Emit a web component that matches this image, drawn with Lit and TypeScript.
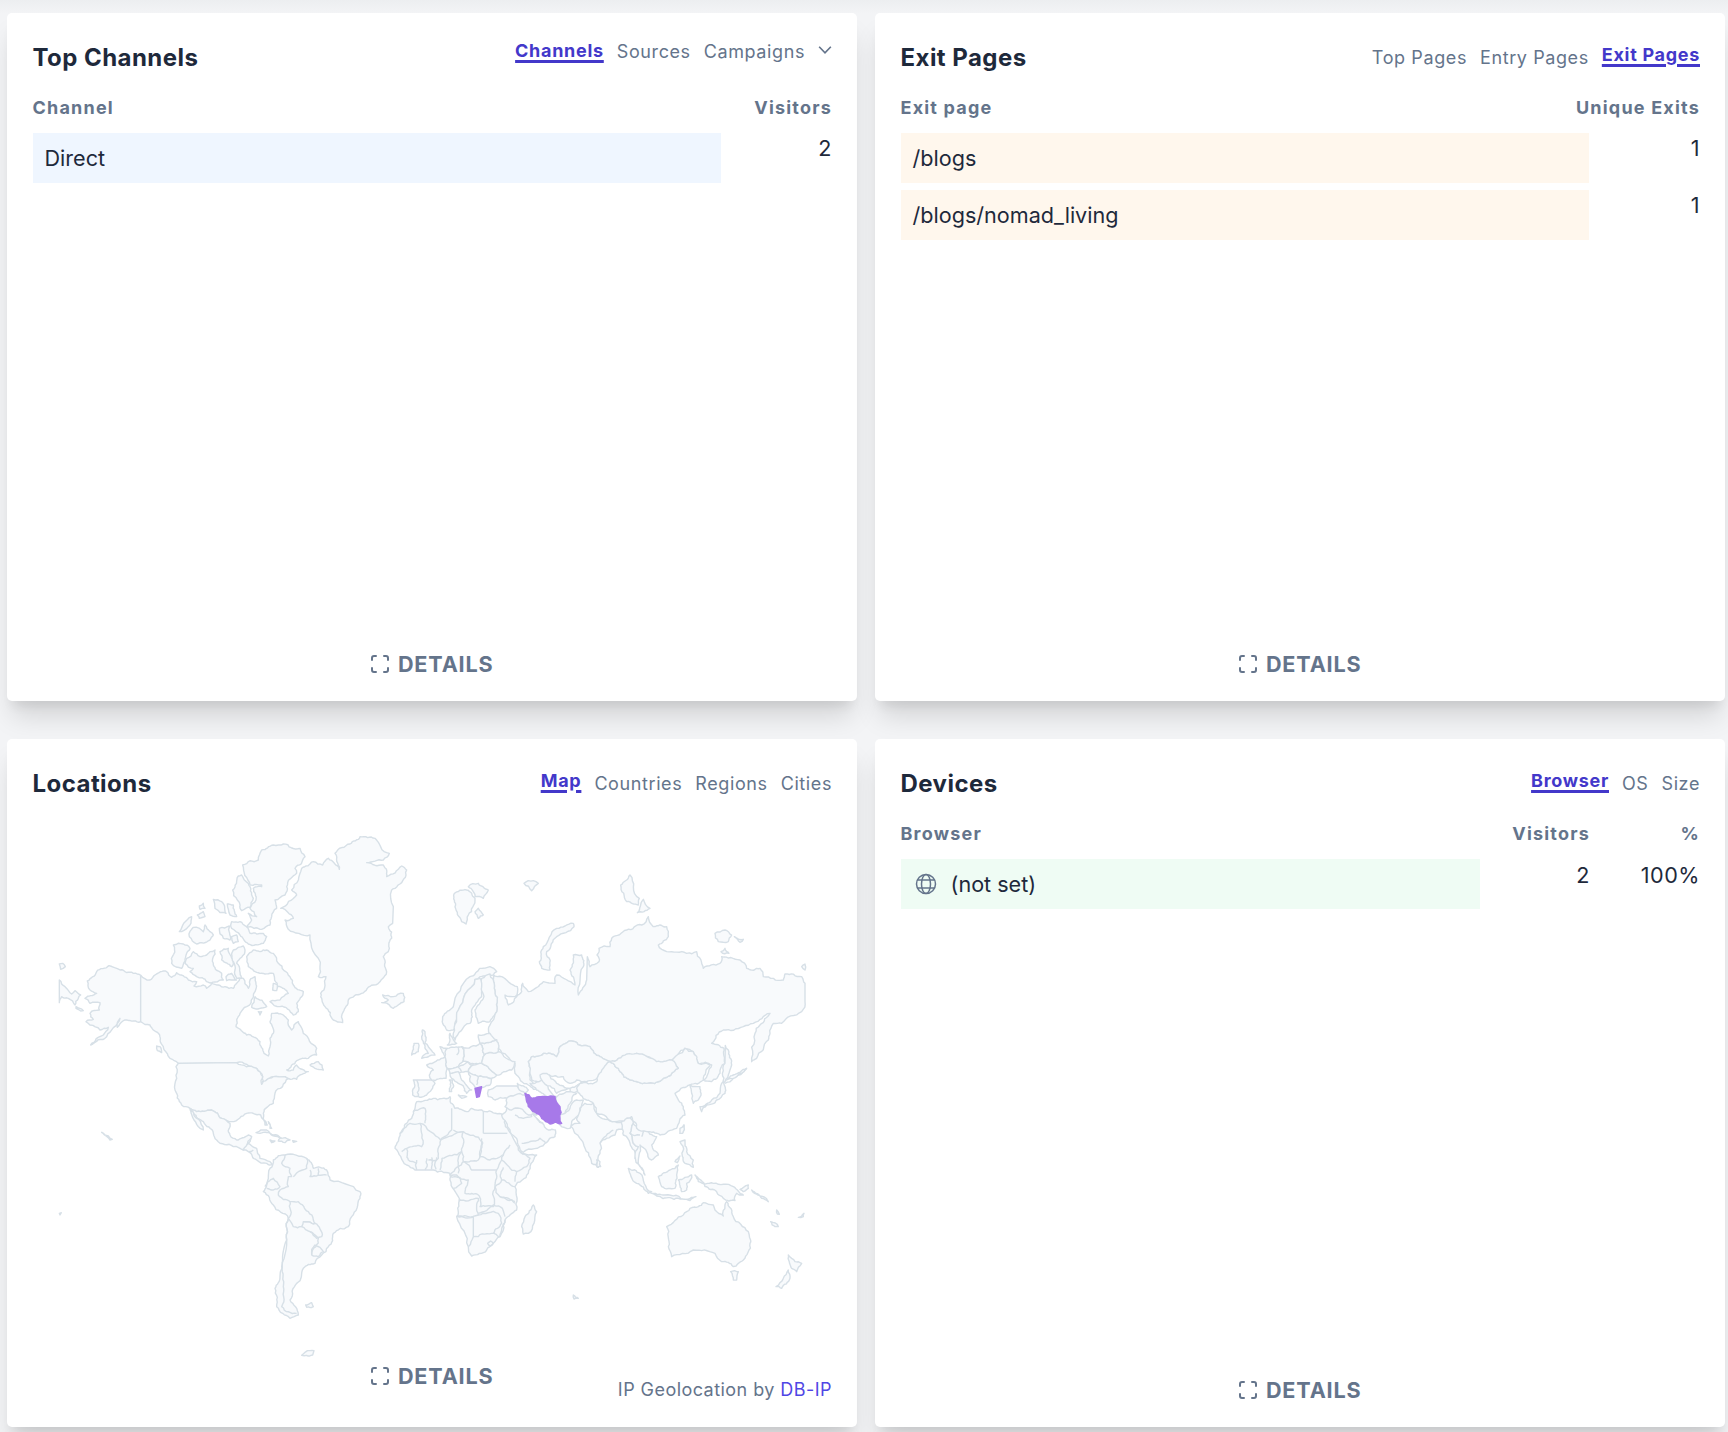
import { LitElement, html, css, svg } from "lit";
import { customElement } from "lit/decorators.js";

type Group = { x: number; y: number; fill: string[]; line?: string[] };

const LAND: Group[] = [
  // North America (crop origin 40,820)
  { x: 40, y: 820, fill: [
    "M58 480L75 500L95 522L105 512L122 525L115 535L105 555L85 535L65 530L58 548Z",
    "M58 432L68 430L76 440L62 448Z",
    "M108 560L130 572L122 573L108 565Z",
    "M302 466L280 460L240 450L207 437L170 455L142 483L150 510L170 520L135 535L150 550L180 548L178 570L150 580L160 598L138 605L150 615L180 630L205 622L190 645L152 675L200 650L240 595L232 622L260 600L302 605Z",
    "M302 466L330 480L345 465L380 455L395 472L410 458L445 480L470 485L462 498L490 495L500 505L515 490L555 500L580 505L590 490L600 470L610 475L625 505L630 480L645 470L645 515L640 530L620 560L600 580L588 620L620 645L660 665L672 700L685 708L690 680L690 655L700 640L690 605L695 580L730 585L745 600L755 630L775 605L790 640L830 685L830 705L805 715L770 722L740 750L760 750L770 735L805 755L770 778L735 770L700 770L665 793L668 770L650 745L590 728L415 730L390 715L370 680L355 640L330 615L302 605Z",
    "M620 410L640 390L660 395L680 390L700 400L715 430L750 470L760 495L790 515L770 550L775 575L760 585L720 560L690 545L720 540L745 520L715 500L700 460L660 460L625 440Z",
    "M700 490L712 495L710 512L698 510Z","M645 530L680 560L660 565L635 562Z","M655 575L665 575L660 585Z",
    "M440 415L460 395L480 410L500 405L510 395L525 390L520 435L545 460L550 480L500 485L470 470L450 455L460 445L435 430Z",
    "M400 375L430 372L450 385L440 400L425 445L395 430Z",
    "M418 335L455 290L450 315L425 335Z","M448 350L460 322L490 335L495 315L510 335L520 345L510 360L470 372Z",
    "M520 238L545 245L558 280L525 265Z","M478 258L490 250L495 265L480 268Z","M472 285L490 275L495 290L478 295Z",
    "M562 252L580 255L590 290L570 285Z","M538 325L568 318L570 360L550 355Z",
    "M575 305L600 305L630 340L670 340L680 350L670 370L625 372L600 345L575 325Z","M575 350L590 345L595 365L580 370Z",
    "M540 395L565 385L580 420L575 440L545 420Z","M580 390L610 378L615 390L590 430L605 475L590 475L580 425Z","M558 470L575 460L590 480L560 482Z",
    "M608 135L655 120L665 90L700 75L730 72L780 85L795 110L765 145L770 160L740 200L735 225L705 240L710 265L695 290L690 315L665 328L620 320L635 300L625 280L650 290L630 265L648 240L640 205L665 200L665 195L630 195Z",
    "M595 168L605 165L625 190L640 235L630 262L605 272L592 240L578 210Z",
    "M960 50L1005 55L1048 100L1030 120L980 128L1030 135L1040 170L1085 138L1100 150L1098 165L1065 205L1055 210L1058 310L1045 320L1055 355L1045 395L1030 410L1040 455L1000 495L965 520L925 540L910 575L908 608L880 600L855 560L842 520L858 470L835 470L840 440L810 345L745 328L735 300L760 295L722 265L770 225L755 210L785 145L820 125L848 135L865 115L898 148L885 100L930 72Z",
    "M1028 525L1060 530L1090 520L1092 545L1060 565L1025 548L1045 540Z",
    "M350 678L360 680L365 698L352 692Z","M810 735L835 725L850 750L825 745Z",
  ]},
  // USA south, Central and South America (crop origin 40,1080)
  { x: 40, y: 1080, fill: [
    "M415 -50L590 -52L650 -35L668 -10L665 13L700 -10L735 -10L745 -5L705 40L700 70L670 100L682 135L675 135L662 105L620 100L575 125L545 115L515 90L470 95L450 85L425 75L405 30L408 -40Z",
    "M450 85L470 95L515 90L545 115L570 130L570 165L590 180L625 165L635 170L610 210L580 200L530 180L520 160L490 125L460 100Z",
    "M455 90L490 150L480 145L462 120Z",
    "M610 210L625 190L650 205L660 235L690 245L700 255L680 250L650 240L625 215Z",
    "M648 158L680 150L725 175L700 165L660 160Z","M690 180L705 183L695 188Z","M720 175L750 180L735 188L715 183Z","M758 182L770 184L760 187Z","M685 125L695 145L690 145Z",
    "M185 157L205 168L217 178L210 180L195 165Z","M58 400L64 398L60 405Z",
    "M700 240L735 225L800 235L820 265L860 270L870 300L960 335L960 355L935 410L925 440L880 460L865 500L825 550L790 565L770 610L750 660L775 705L750 715L710 680L705 625L720 590L740 480L745 415L700 375L670 335L685 295L690 265Z",
    "M797 675L815 668L820 680L800 682Z","M785 826L810 812L822 812L818 825L800 826Z",
  ], line: [
    "M735 225L725 250L750 265L755 290L745 290L745 320L720 330L715 345L750 365L745 415",
    "M675 320L700 295L720 320L700 330L680 325",
    "M750 365L775 365L805 395L820 420L825 430L790 425L785 440L760 440L745 415",
    "M800 235L800 265L775 275L760 290","M810 270L810 290L860 285","M835 265L835 285",
    "M790 425L825 430L845 470L830 475L810 455L785 440",
    "M825 495L850 515L835 530L815 525Z","M745 415L740 480L725 560L730 620L725 680L770 700",
    "M810 455L835 475L815 525","M625 190L632 175","M640 210L625 215",
  ]},
  // Africa, Australia, SE Asia, India (crop origin 400,1080)
  { x: 400, y: 1080, fill: [
    "M50 65L100 55L150 50L165 85L200 95L215 85L255 95L305 102L325 150L355 210L385 225L410 225L385 280L345 320L350 390L315 420L300 470L260 510L215 528L205 500L170 410L180 360L150 300L150 280L100 270L45 270L20 255L-15 205L0 160L20 130L40 95Z",
    "M365 440L375 410L400 375L410 395L385 460L370 462Z",
    "M305 105L320 85L375 85L410 115L432 135L445 150L466 150L465 170L435 190L370 217L355 195L330 150Z",
    "M555 70L580 70L590 100L645 125L665 125L675 145L650 150L645 165L600 190L590 250L595 262L575 250L550 190L540 175L510 140L540 130L530 115Z",
    "M590 240L600 245L602 260L592 262Z",
    "M665 125L690 110L700 130L690 160L715 200L705 235L690 190L670 165Z",
    "M690 160L700 130L730 150L770 170L755 195L775 225L755 240L740 215L720 195L715 240L735 285L720 260L705 230L715 200Z",
    "M685 265L720 280L755 335L745 340L710 310Z","M750 338L795 345L860 358L810 353L770 348Z",
    "M775 290L810 270L835 255L830 285L825 325L785 320Z","M835 300L875 285L860 310L860 330L845 335Z",
    "M840 185L855 180L860 215L880 240L880 262L855 250L848 215Z","M825 245L840 228L832 248Z","M840 160L852 135L850 155Z",
    "M860 358L888 350L870 362Z","M885 285L895 305L940 310L1000 320L1030 345L1010 340L1005 362L970 355L950 335L915 320Z",
    "M1020 328L1045 315L1045 325L1030 335Z","M1055 330L1090 350L1105 365L1085 355Z","M1130 390L1138 403L1132 402Z","M1195 412L1212 400L1210 410Z","M1112 425L1135 440L1125 440Z",
    "M800 440L850 405L870 385L895 380L910 368L940 375L945 390L970 408L980 365L1000 410L1045 455L1050 490L1030 540L1000 560L965 545L945 520L880 510L815 530L805 500Z",
    "M992 575L1015 575L1010 600L1000 600Z","M1165 525L1185 545L1205 550L1190 575L1175 565Z","M1165 570L1170 595L1145 625L1128 620L1150 595Z","M520 645L535 655L522 657Z",
  ], line: [
    "M40 95L75 85L75 130","M0 160L30 130L60 130L65 200L20 205L5 215","M60 130L122 180L155 150L155 85",
    "M122 180L115 235L85 240","M122 180L190 155L185 215L125 235","M160 150L190 155","M250 95L250 160",
    "M190 155L245 185L235 240L190 245L185 215","M250 160L322 160","M245 175L240 230L270 240L310 225L330 195",
    "M310 225L305 240L350 275L380 260L390 235L360 215","M350 275L345 305","M125 235L120 270","M185 215L175 260L150 285",
    "M190 245L175 260L175 280","M190 245L215 270L290 270L305 240","M150 290L205 300L195 340L235 345L240 380L280 380L285 320L290 270",
    "M150 290L170 285L185 310L160 325","M285 320L305 300L345 320","M305 300L310 262","M345 370L300 350L285 320",
    "M175 360L235 355L235 405L170 408","M170 410L220 410L220 470L205 500","M235 400L280 375L300 380",
    "M300 350L345 365","M300 380L315 410","M315 420L310 450L300 470","M220 470L275 460L300 470","M235 405L295 400L305 430L280 460",
    "M20 205L25 240L50 250","M50 240L50 270","M80 235L75 270","M95 232L95 268","M110 232L108 268",
    "M263 490L272 483L280 490L270 498Z","M365 190L420 175L437 188","M375 85L395 110L370 115L345 105","M410 115L430 130",
    "M600 190L640 150","M610 100L645 115","M690 160L720 165","M730 150L725 170",
  ]},
  // Europe, N Asia (crop origin 400,820)
  { x: 400, y: 820, fill: [
    "M290 575L285 520L280 480L280 465L305 470L352 500L345 530L315 525L325 555L350 530L365 515L368 490L385 515L430 485L465 490L470 465L525 495L510 450L520 405L545 405L550 440L535 525L560 480L562 410L570 440L597 425L597 385L630 380L635 355L680 330L725 315L745 290L760 320L800 320L805 350L775 375L800 395L860 400L890 395L910 445L960 430L965 410L1020 420L1040 445L1080 445L1090 470L1150 480L1155 462L1205 470L1215 490L1215 545L1205 575L1145 610L1120 610L1110 640L1105 660L1070 715L1055 725L1065 640L1080 615L1110 580L1060 610L1030 620L970 630L935 670L972 685L975 730L960 760L935 785L910 780L935 735L895 730L880 695L855 685L815 720L770 725L710 700L655 715L630 725L600 710L570 680L525 665L480 680L470 710L430 700L395 710L385 725L390 780L420 815L385 795L345 760L345 730L295 685L268 640L275 605Z",
    "M418 425L430 380L470 325L520 310L522 320L470 350L440 395L450 450L425 445Z",
    "M162 222L200 210L225 235L205 285L198 312L185 305L165 260Z","M205 200L235 190L265 210L250 235L225 230Z","M225 275L235 265L250 285L235 295Z",
    "M372 190L400 182L415 190L395 212Z","M662 195L690 165L718 235L715 255L680 245Z","M712 278L730 238L750 265Z",
    "M945 340L975 330L995 345L985 365L955 365Z","M1003 350L1030 358L1020 367Z","M963 395L975 385L987 400Z","M1205 440L1215 432L1215 450Z",
    "M976 676L985 690L995 735L985 765L970 790L975 730Z",
    "M128 590L160 560L210 470L240 445L270 440L290 455L280 465L240 470L225 478L175 570L165 620L160 630L140 630L128 610Z",
    "M225 478L240 475L245 530L215 570L210 610L165 660L160 640L175 570Z",
    "M245 475L270 462L280 480L285 520L290 575L270 605L235 610L225 570L250 535L245 490Z",
    "M395 710L430 700L470 710L480 680L525 665L570 680L600 710L635 725L620 745L595 770L560 785L530 780L510 790L490 770L445 765L430 780L420 790L395 780L385 725Z",
  ], line: ["M1040 745L1000 775L975 790"] },
  // Europe, Middle East (crop origin 390,1000)
  { x: 390, y: 1000, fill: [
    "M97 90L105 95L105 130L135 165L95 175L115 160L100 125L95 110Z","M72 130L85 130L85 155L65 165Z",
    "M70 240L125 240L135 250L110 285L75 290L68 285Z",
    "M120 190L165 170L172 205L168 235L125 240L118 225L130 210L110 195Z",
    "M150 140L172 145L172 172L165 170L155 150Z",
    "M172 145L215 140L218 185L205 200L172 205L165 170Z",
    "M215 140L270 130L283 165L275 190L232 185L218 185Z",
    "M172 205L205 200L232 185L250 195L235 215L180 220Z",
    "M235 215L250 195L275 190L283 195L320 225L305 235L265 230L245 225Z",
    "M235 215L265 230L305 235L300 255L280 262L260 268L240 245Z",
    "M283 165L325 155L375 185L365 210L320 225L283 195L275 190Z",
    "M270 130L320 120L325 155L283 165Z",
    "M265 105L300 100L320 120L270 130Z",
    "M180 100L200 130L172 135Z",
    "M180 220L205 215L215 240L245 270L230 280L205 250L185 235Z","M178 240L188 240L185 275L178 275Z","M205 285L230 290L215 295Z",
    "M295 270L320 258L380 258L405 275L405 290L350 295L315 300L295 290Z",
    "M350 295L405 285L415 315L440 345L415 345L390 325L365 330L345 320Z","M382 250L415 270L405 280L385 265Z",
    "M420 250L455 240L500 290L470 290L440 270L430 260Z","M450 225L470 220L500 250L540 265L500 280L455 240Z",
    "M540 265L590 245L560 275L545 280Z","M500 290L540 275L560 280L540 310L525 340L500 340Z",
    "M500 340L525 340L560 300L580 300L560 350L545 365L540 385L510 375Z",
  ], line: ["M80 240L85 290","M205 200L215 215","M265 230L260 255","M205 140L200 165"] },
  // East Asia (crop origin 560,1000)
  { x: 560, y: 1000, fill: [
    "M150 185L130 205L115 225L110 245L60 250L50 265L80 300L100 310L110 340L165 365L215 350L230 385L260 395L300 405L350 385L375 345L370 320L345 280L370 262L390 255L430 240L450 195L415 190L400 155L375 145L335 185L355 205L305 240L260 250L210 240L180 215Z",
    "M150 185L175 175L230 160L290 185L335 180L355 205L305 240L260 250L210 240L180 215Z",
    "M390 255L420 260L415 300L400 310L395 280Z",
    "M490 245L495 280L470 300L440 315L425 335L420 320L455 300L480 280L485 250Z",
    "M500 240L520 235L560 205L520 225L505 235Z",
    "M360 385L372 375L368 400L360 400Z",
  ]},
];

const IRAN = "M375 40L395 55L440 50L465 50L480 80L480 115L485 130L450 132L425 115L395 90L380 65Z";
const GREECE = "M225 25L245 20L238 50L230 52Z";

/** Roughen a hand-placed outline so it reads as a coastline; identical segments roughen identically, so shared borders still coincide. */
function rough(d: string): string {
  const closed = d.endsWith("Z");
  const pts = d.replace(/[MZ]/g, "").split("L").map((s) => s.trim().split(" ").map(Number));
  if (closed) pts.push(pts[0]);
  const bump = (a: number[], b: number[], depth: number): number[][] => {
    const dx = b[0] - a[0], dy = b[1] - a[1];
    const len = Math.hypot(dx, dy);
    const straight = len > 50 && (Math.abs(dx) <= 2 || Math.abs(dy) <= 2);
    if (depth === 0 || len < 9 || straight) return [b];
    const forward = a[0] < b[0] || (a[0] === b[0] && a[1] < b[1]);
    const [p, q] = forward ? [a, b] : [b, a];
    const h = Math.sin(p[0] * 12.9898 + p[1] * 78.233 + q[0] * 37.719 + q[1] * 4.581) * 43758.5453;
    const r = (h - Math.floor(h)) * 2 - 1;
    const amp = Math.min(len * 0.16, 6) * r;
    const sx = q[0] - p[0], sy = q[1] - p[1];
    const m = [(a[0] + b[0]) / 2 - (sy / len) * amp, (a[1] + b[1]) / 2 + (sx / len) * amp];
    return [...bump(a, m, depth - 1), ...bump(m, b, depth - 1)];
  };
  const out: number[][] = [pts[0]];
  for (let i = 1; i < pts.length; i++) out.push(...bump(pts[i - 1], pts[i], 3));
  return "M" + out.map((p) => `${p[0].toFixed(1)} ${p[1].toFixed(1)}`).join("L") + (closed ? "Z" : "");
}

const detailsIcon = html`<svg class="expand" viewBox="0 0 18 18" aria-hidden="true"><path d="M1 5V3a2 2 0 0 1 2-2h2M13 1h2a2 2 0 0 1 2 2v2M17 13v2a2 2 0 0 1-2 2h-2M5 17H3a2 2 0 0 1-2-2v-2"/></svg>`;

const globe = html`<svg class="globe" viewBox="0 0 22 22" aria-hidden="true"><circle cx="11" cy="11" r="9.5"/><ellipse cx="11" cy="11" rx="4.5" ry="9.5"/><path d="M2.4 7h17.2M2.4 15h17.2"/></svg>`;

const chevron = html`<svg class="chev" viewBox="0 0 12 8" aria-hidden="true"><path d="M1 1.2L6 6.4L11 1.2"/></svg>`;

@customElement("app-root")
export class AppRoot extends LitElement {
  static styles = css`
    :host {
      display: block; height: 1432px; overflow: hidden; box-sizing: border-box;
      padding: 13px 3px 0 7px;
      background: linear-gradient(#eceef0, #f3f4f6 13px) #f3f4f6;
      font-family: Inter, "Liberation Sans", sans-serif; color: #1e293b;
      -webkit-font-smoothing: antialiased;
    }
    .grid { display: grid; grid-template-columns: 1fr 1fr; column-gap: 18px; row-gap: 38px; grid-auto-rows: 688px; }
    .card {
      display: flex; flex-direction: column; box-sizing: border-box; background: #fff; border-radius: 5px;
      padding: 29px 25px 23px 25.5px;
      box-shadow: 0 20px 25px -5px rgba(0,0,0,.13), 0 10px 10px -5px rgba(0,0,0,.07);
    }
    .head { display: flex; justify-content: space-between; align-items: center; height: 32px; }
    h3 { margin: 0; font-size: 24px; line-height: 32px; font-weight: 700; color: #1e293b; letter-spacing: .45px; }
    .tabs { display: flex; align-items: center; gap: 13px; font-size: 18px; line-height: 24px; color: #64748b; letter-spacing: .6px; }
    .tabs.up { margin-top: -12px; }
    .tab.active { color: #4338ca; font-weight: 700; letter-spacing: .7px; text-decoration: underline; text-decoration-thickness: 3px; text-underline-offset: 3px; margin-bottom: 6px; }
    .tabs.up .tab.active { margin-bottom: 2px; }
    .chev { width: 14px; height: 10px; margin-top: -4px; fill: none; stroke: #64748b; stroke-width: 1.4; }
    .cols { display: flex; justify-content: space-between; margin-top: 22px; font-size: 18px; line-height: 24px; font-weight: 700; color: #64748b; letter-spacing: 1.2px; }
    .col-r { display: flex; }
    .col-r .num { line-height: 24px; padding-top: 0; letter-spacing: 1.2px; }
    .list { display: flex; flex-direction: column; gap: 7px; margin-top: 13px; }
    .row { display: flex; align-items: flex-start; font-size: 21.6px; height: 50px; }
    .bar { flex: 1; height: 50px; display: flex; align-items: center; gap: 14px; padding-left: 12px; box-sizing: border-box; }
    .blue { background: #eff6ff; } .orange { background: #fff7ed; } .green { background: #effcf4; }
    .num { text-align: right; line-height: 28px; padding-top: 1px; letter-spacing: .5px; }
    .w111 { width: 111px; } .w110 { width: 110px; }
    .dev .num { padding-top: 2px; }
    .globe { width: 22px; height: 22px; margin-left: 2px; fill: none; stroke: #64748b; stroke-width: 1.5; }
    .foot { margin-top: auto; display: grid; grid-template-columns: 1fr auto 1fr; align-items: start; }
    .details { grid-column: 2; display: flex; align-items: center; gap: 9px; font-size: 21.6px; line-height: 28px; font-weight: 700; color: #64748b; letter-spacing: .85px; }
    .expand { width: 18px; height: 18px; fill: none; stroke: #64748b; stroke-width: 2; stroke-linecap: round; }
    .foot.map-foot .details { margin-bottom: 14px; }
    .note { grid-column: 3; align-self: end; justify-self: end; white-space: nowrap; font-size: 18px; line-height: 26px; color: #64748b; letter-spacing: .45px; margin-bottom: 1px; }
    .note a { color: #4f46e5; text-decoration: none; }
    .map { display: block; width: 797px; height: 530px; margin-top: 30px; flex: none; }
    .land path { fill: #f8fafc; stroke: #d7e0e7; stroke-width: 1.4; stroke-linejoin: round; vector-effect: non-scaling-stroke; }
    .land path.b { fill: none; }
    .land path.hi { fill: #a779e9; stroke: #a779e9; }
  `;

  private map() {
    return html`<svg class="map" viewBox="33 830 797 530" role="img" aria-label="World map"><g class="land">
      ${LAND.map((g) => svg`<g transform="translate(${g.x} ${g.y}) scale(.33333)">
        ${g.fill.map((d) => svg`<path d=${rough(d)}></path>`)}
        ${(g.line ?? []).map((d) => svg`<path class="b" d=${rough(d)}></path>`)}
      </g>`)}
      <g transform="translate(400 1080) scale(.33333)">
        <path class="hi" d=${rough(IRAN)}></path><path class="hi" d=${GREECE}></path>
      </g>
    </g></svg>`;
  }

  private foot() {
    return html`<div class="foot"><div class="details">${detailsIcon}DETAILS</div></div>`;
  }

  render() {
    return html`<div class="grid">
      <section class="card">
        <div class="head"><h3>Top Channels</h3>
          <div class="tabs up"><span class="tab active">Channels</span><span class="tab">Sources</span><span class="tab">Campaigns</span>${chevron}</div></div>
        <div class="cols"><span>Channel</span><span>Visitors</span></div>
        <div class="list"><div class="row"><div class="bar blue">Direct</div><div class="num w111">2</div></div></div>
        ${this.foot()}
      </section>
      <section class="card">
        <div class="head"><h3>Exit Pages</h3>
          <div class="tabs"><span class="tab">Top Pages</span><span class="tab">Entry Pages</span><span class="tab active">Exit Pages</span></div></div>
        <div class="cols"><span>Exit page</span><span>Unique Exits</span></div>
        <div class="list">
          <div class="row"><div class="bar orange">/blogs</div><div class="num w111">1</div></div>
          <div class="row"><div class="bar orange">/blogs/nomad_living</div><div class="num w111">1</div></div>
        </div>
        ${this.foot()}
      </section>
      <section class="card">
        <div class="head"><h3>Locations</h3>
          <div class="tabs"><span class="tab active">Map</span><span class="tab">Countries</span><span class="tab">Regions</span><span class="tab">Cities</span></div></div>
        ${this.map()}
        <div class="foot map-foot"><div class="details">${detailsIcon}DETAILS</div>
          <div class="note">IP Geolocation by <a>DB-IP</a></div></div>
      </section>
      <section class="card">
        <div class="head"><h3>Devices</h3>
          <div class="tabs"><span class="tab active">Browser</span><span class="tab">OS</span><span class="tab">Size</span></div></div>
        <div class="cols"><span>Browser</span><div class="col-r"><span class="w110 num">Visitors</span><span class="w110 num">%</span></div></div>
        <div class="list"><div class="row dev"><div class="bar green">${globe}(not set)</div><div class="num w110">2</div><div class="num w110">100%</div></div></div>
        ${this.foot()}
      </section>
    </div>`;
  }
}
